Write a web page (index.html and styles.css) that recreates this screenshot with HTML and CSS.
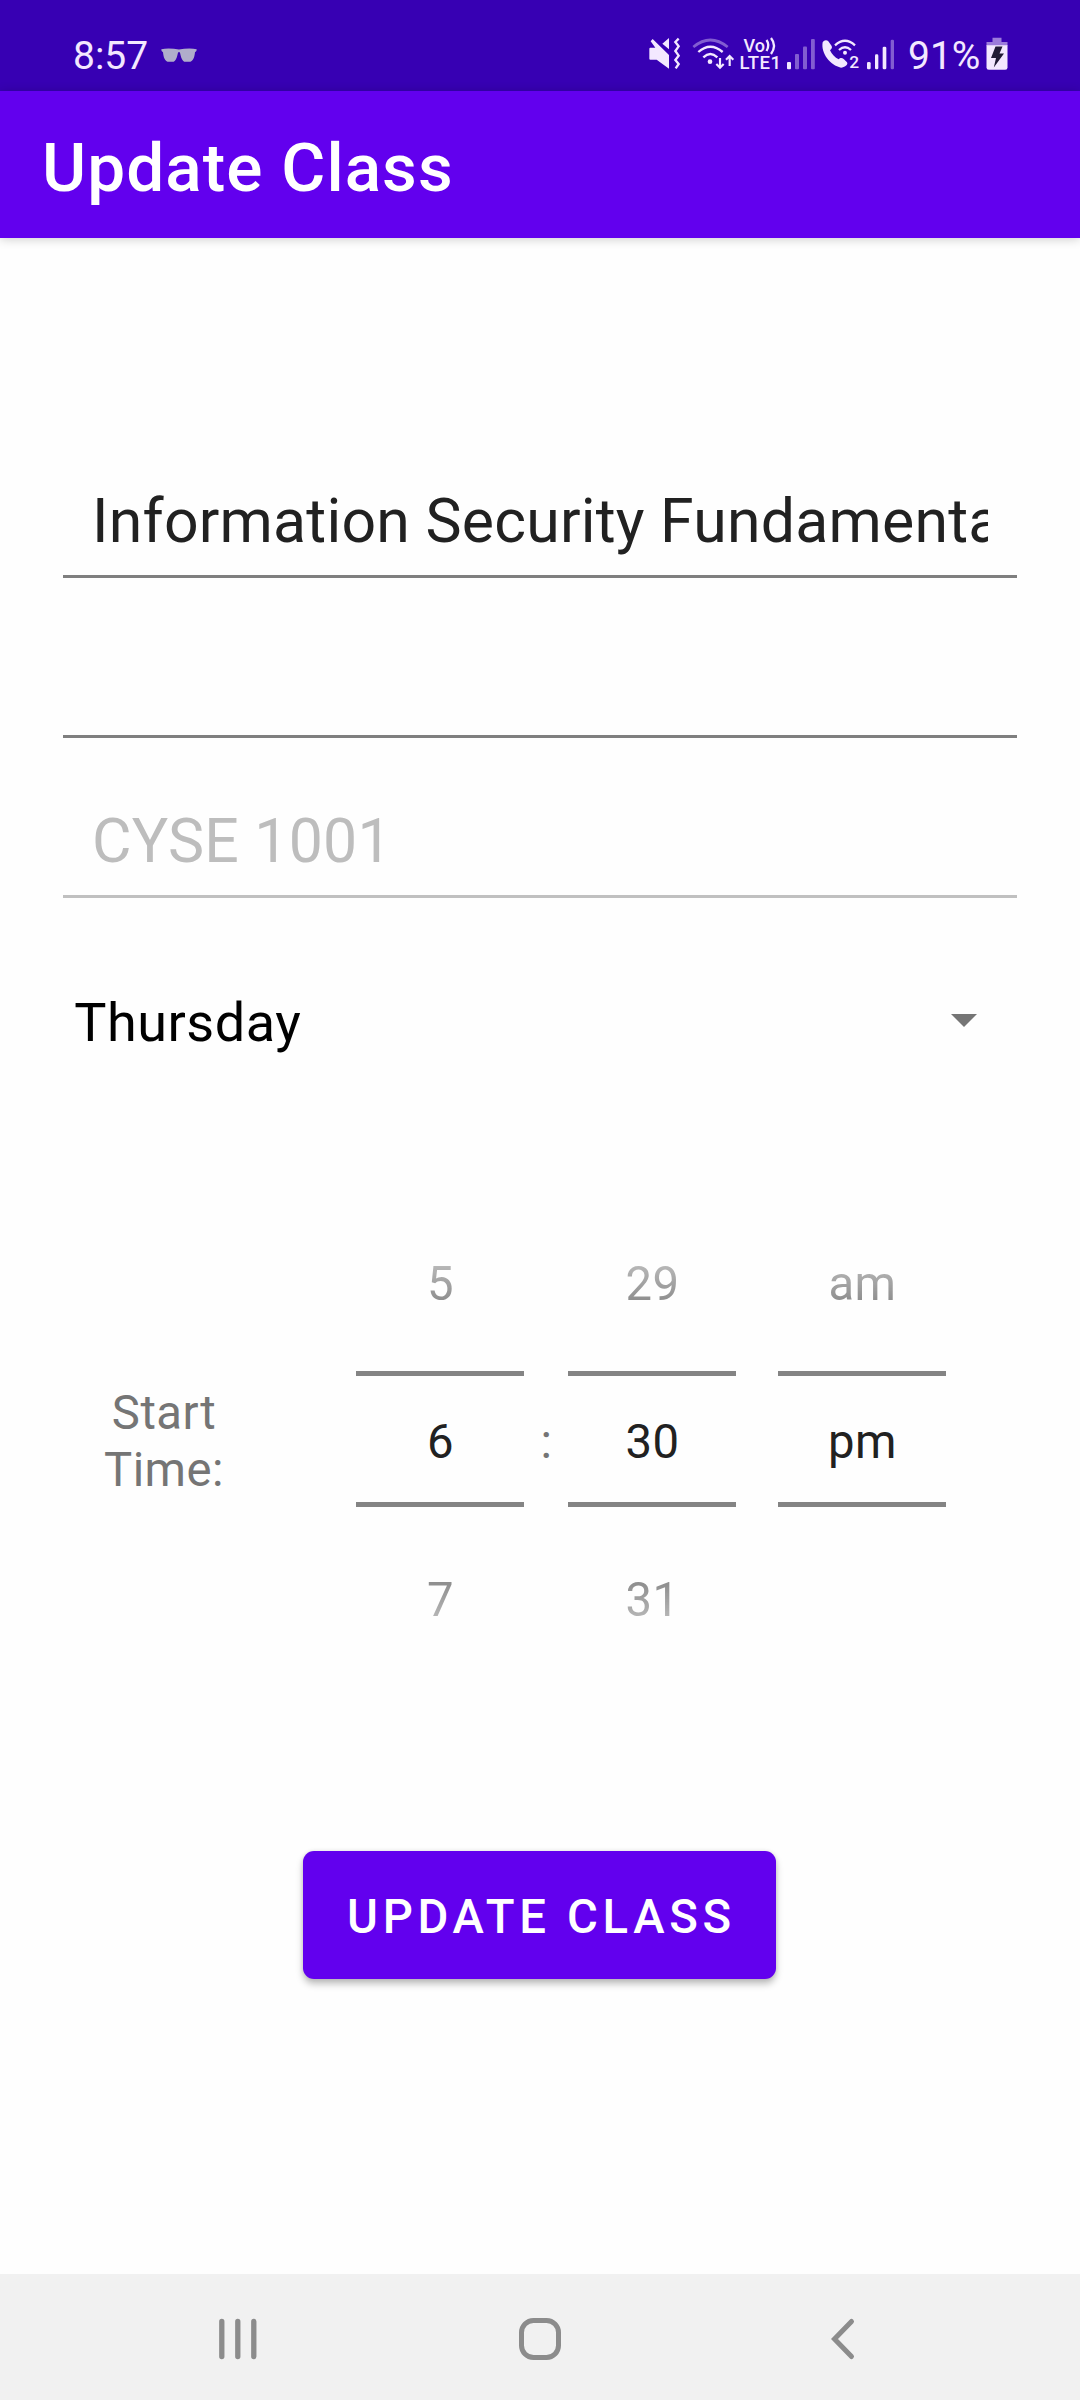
FILE: index.html
```html
<!DOCTYPE html>
<html lang="en">
<head>
<meta charset="utf-8">
<title>Update Class</title>
<link rel="stylesheet" href="styles.css">
</head>
<body>
<div class="screen">
  <div class="status">
    <span class="clock">8:57</span>
    <svg class="glasses" width="36" height="16" viewBox="0 0 36 16"><path d="M.3 2.2C5 1 12 1.200 18 2.600 24 1.200 31 1 35.700 2.200L35.400 4 34 5.200C33.500 10 32.300 14.800 28 14.800H24.500C21 14.800 20 10 18.900 5.200H17.100C16 10 15 14.800 11.500 14.800H8C3.700 14.800 2.500 10 2 5.200L.6 4Z" fill="#b0adcb"/></svg>
    <span class="spacer"></span>
    <svg class="icon" width="100" height="50" viewBox="0 0 300 150"><g fill="#f3e8ff"><path d="M28 56q0-3 3-3h15L32 34l6-7 49 48v41L50 89H31q-3 0-3-3ZM67 41 87 24v34Z"/><circle cx="210" cy="95" r="7"/></g><g fill="none" stroke="#f3e8ff" stroke-width="7"><path d="m116 26-10 10 10 13-10 14 10 14-10 13 10 12-9 13"/><path d="M175 66Q211 34 248 66M190 82Q211 62 232 82"/><path d="M240 84v28M229 102l11 11 11-11M269 108V79M258 89l11-11 11 11" stroke-width="6.500"/><path opacity=".4" d="M160 51Q211 9 263 51" stroke-width="8"/></g></svg>
    <svg class="icon" width="75" height="50" viewBox="740 30 75 50"><g fill="#f3e8ff" font-family="Roboto, sans-serif" font-weight="500"><text x="743.500" y="52" font-size="18">Vo</text><text x="739.500" y="69.300" font-size="18.500" textLength="41.500">LTE1</text><rect x="787" y="62" width="4" height="7.300" rx="1"/><g opacity=".4"><rect x="795" y="54" width="4" height="15.300" rx="1"/><rect x="803" y="46.500" width="4" height="22.800" rx="1"/><rect x="811" y="39" width="3.800" height="30.300" rx="1"/></g></g><path d="M766.500 40q3.600 5 0 11M771 38q6 7.500 0 16" fill="none" stroke="#f3e8ff" stroke-width="2.300"/></svg>
    <svg class="icon" width="85" height="50" viewBox="0 0 255 150"><g fill="#f3e8ff"><path d="M23 37C27 29 36 29 40 34L50 48C53 54 48 58 45 61 50 73 60 83 71 88 75 83 81 82 86 87L96 97C101 104 88 113 78 113 46 107 17 70 23 37Z"/><circle cx="90" cy="68" r="6"/><text x="103" y="113" font-family="Roboto, sans-serif" font-size="52" font-weight="500">2</text><rect x="156" y="96" width="11" height="22" rx="4"/><rect x="180" y="73" width="10" height="45" rx="4"/><rect x="203" y="50" width="11" height="68" rx="4"/><rect x="227" y="29" width="10" height="89" rx="4" opacity=".4"/></g><path d="M60 46Q90 19 120 46M72 60Q90 44 108 60" fill="none" stroke="#f3e8ff" stroke-width="7"/></svg>
    <span class="percent">91%</span>
    <svg class="battery" width="22" height="50" viewBox="985.500 30 22 50"><path d="M992 37.700h9V42h6v4h-21v-4h6Z" fill="#9b7bdb"/><path d="M986 45.300h21V67.500q0 2.300-2.300 2.300h-16.400q-2.300 0-2.300-2.300Z" fill="#f3e8ff"/><path d="m995 46.500h7L999 53.500h4.500l-10.200 14 2.200-9.500h-5Z" fill="#201a35"/></svg>
  </div>
  <header class="appbar"><h1 class="title">Update Class</h1></header>
  <main class="form">
    <div class="field"><div class="value">Information Security Fundamentals</div></div>
    <div class="field"><div class="value"></div></div>
    <div class="field disabled"><div class="value">CYSE 1001</div></div>
    <div class="spinner"><span>Thursday</span><svg width="26" height="13" viewBox="0 0 26 13"><path d="M0 0h26L13 13Z" fill="#757575"/></svg></div>
    <div class="time">
      <div class="label">Start<br>Time:</div>
      <div class="picker">
        <div class="wheel"><div class="prev">5</div><div class="current">6</div><div class="next">7</div></div>
        <div class="colon">:</div>
        <div class="wheel"><div class="prev">29</div><div class="current">30</div><div class="next">31</div></div>
        <div class="wheel period"><div class="prev">am</div><div class="current">pm</div><div class="next"></div></div>
      </div>
    </div>
    <button class="submit">UPDATE CLASS</button>
  </main>
  <nav class="navbar">
    <svg width="42" height="46" viewBox="0 0 42 46"><path d="M4.800 5.500v35M20.800 5.500v35M36.800 5.500v35" stroke="#8c8c8c" stroke-width="5.300" stroke-linecap="round"/></svg>
    <svg width="46" height="46" viewBox="0 0 46 46"><rect x="4.500" y="4.500" width="37" height="37" rx="12" fill="none" stroke="#8c8c8c" stroke-width="5"/></svg>
    <svg width="36" height="46" viewBox="0 0 36 46"><path d="M30.500 5.500 13.500 23l17 17.500" fill="none" stroke="#8c8c8c" stroke-width="5" stroke-linecap="round"/></svg>
  </nav>
</div>
</body>
</html>
```
FILE: styles.css
```css
* { box-sizing: border-box; }
body { margin: 0; font-family: Roboto, sans-serif; background: #fefefe; }
svg { display: block; flex: none; }
.screen { width: 1080px; height: 2400px; display: flex; flex-direction: column; overflow: hidden; }

.status { height: 91px; padding: 20px 72.500px 0 73px; background: #3700b3; color: #f3e8ff; display: flex; align-items: center; font-size: 39px; line-height: 70px; }
.glasses { margin: -2px 0 0 13px; }
.spacer { flex: 1; }
.icon { margin-top: -1px; }
.percent { width: 85.500px; padding-left: 8px; white-space: nowrap; }
.battery { margin-top: -1px; }

.appbar { height: 147px; padding: 6px 0 0 42px; background: #6200ee; color: #fff; display: flex; align-items: center; box-shadow: 0 1px 10px rgba(0, 0, 0, .2); }
.title { margin: 0; font-size: 67.500px; font-weight: 500; letter-spacing: 1.050px; }

.form { flex: 1; display: flex; flex-direction: column; padding: 180px 63px 0; }
.field { height: 160px; padding: 64px 29px 13px; border-bottom: 3px solid #7f7f7f; color: #212121; }
.value { height: 80px; line-height: 80px; font-size: 60.750px; letter-spacing: .230px; white-space: nowrap; overflow: hidden; }
.disabled { color: #bdbdbd; border-color: #c0c0c0; }

.spinner { height: 245px; padding: 4px 40px 0 11.300px; color: #000; font-size: 54px; letter-spacing: .5px; display: flex; align-items: center; justify-content: space-between; }
.spinner svg { margin-top: -4px; }

.time { margin-top: 62px; height: 474px; display: flex; align-items: center; font-size: 47.250px; }
.label { width: 202px; color: #757575; text-align: center; line-height: 57.500px; letter-spacing: .5px; }
.picker { margin-left: 91px; display: flex; color: #212121; letter-spacing: .5px; text-align: center; }
.wheel { width: 168px; line-height: 158px; }
.period { margin-left: 42px; }
.prev, .current, .next { padding-left: 1px; }
.prev { height: 166px; -webkit-mask-image: linear-gradient(transparent, rgba(0, 0, 0, .870)); mask-image: linear-gradient(transparent, rgba(0, 0, 0, .870)); }
.current { height: 136px; border: solid #848484; border-width: 5px 0; line-height: 132px; }
.next { height: 172px; padding-top: 14px; -webkit-mask-image: linear-gradient(rgba(0, 0, 0, .900), transparent); mask-image: linear-gradient(rgba(0, 0, 0, .900), transparent); }
.colon { width: 44px; padding-left: 1px; line-height: 474px; color: #757575; }

.submit { align-self: center; margin: 172px 0 0 -1px; width: 473px; height: 128px; padding: 4px 0 0 4px; border: 0; border-radius: 11px; background: #6200ee; color: #fff; font: 500 47.250px Roboto, sans-serif; letter-spacing: 4.700px; white-space: nowrap; box-shadow: 0 5px 7px rgba(0, 0, 0, .25), 0 0 4px rgba(0, 0, 0, .1); }

.navbar { height: 126px; padding: 4px 223px 0 217px; background: #f1f1f1; display: flex; align-items: center; justify-content: space-between; }
```
